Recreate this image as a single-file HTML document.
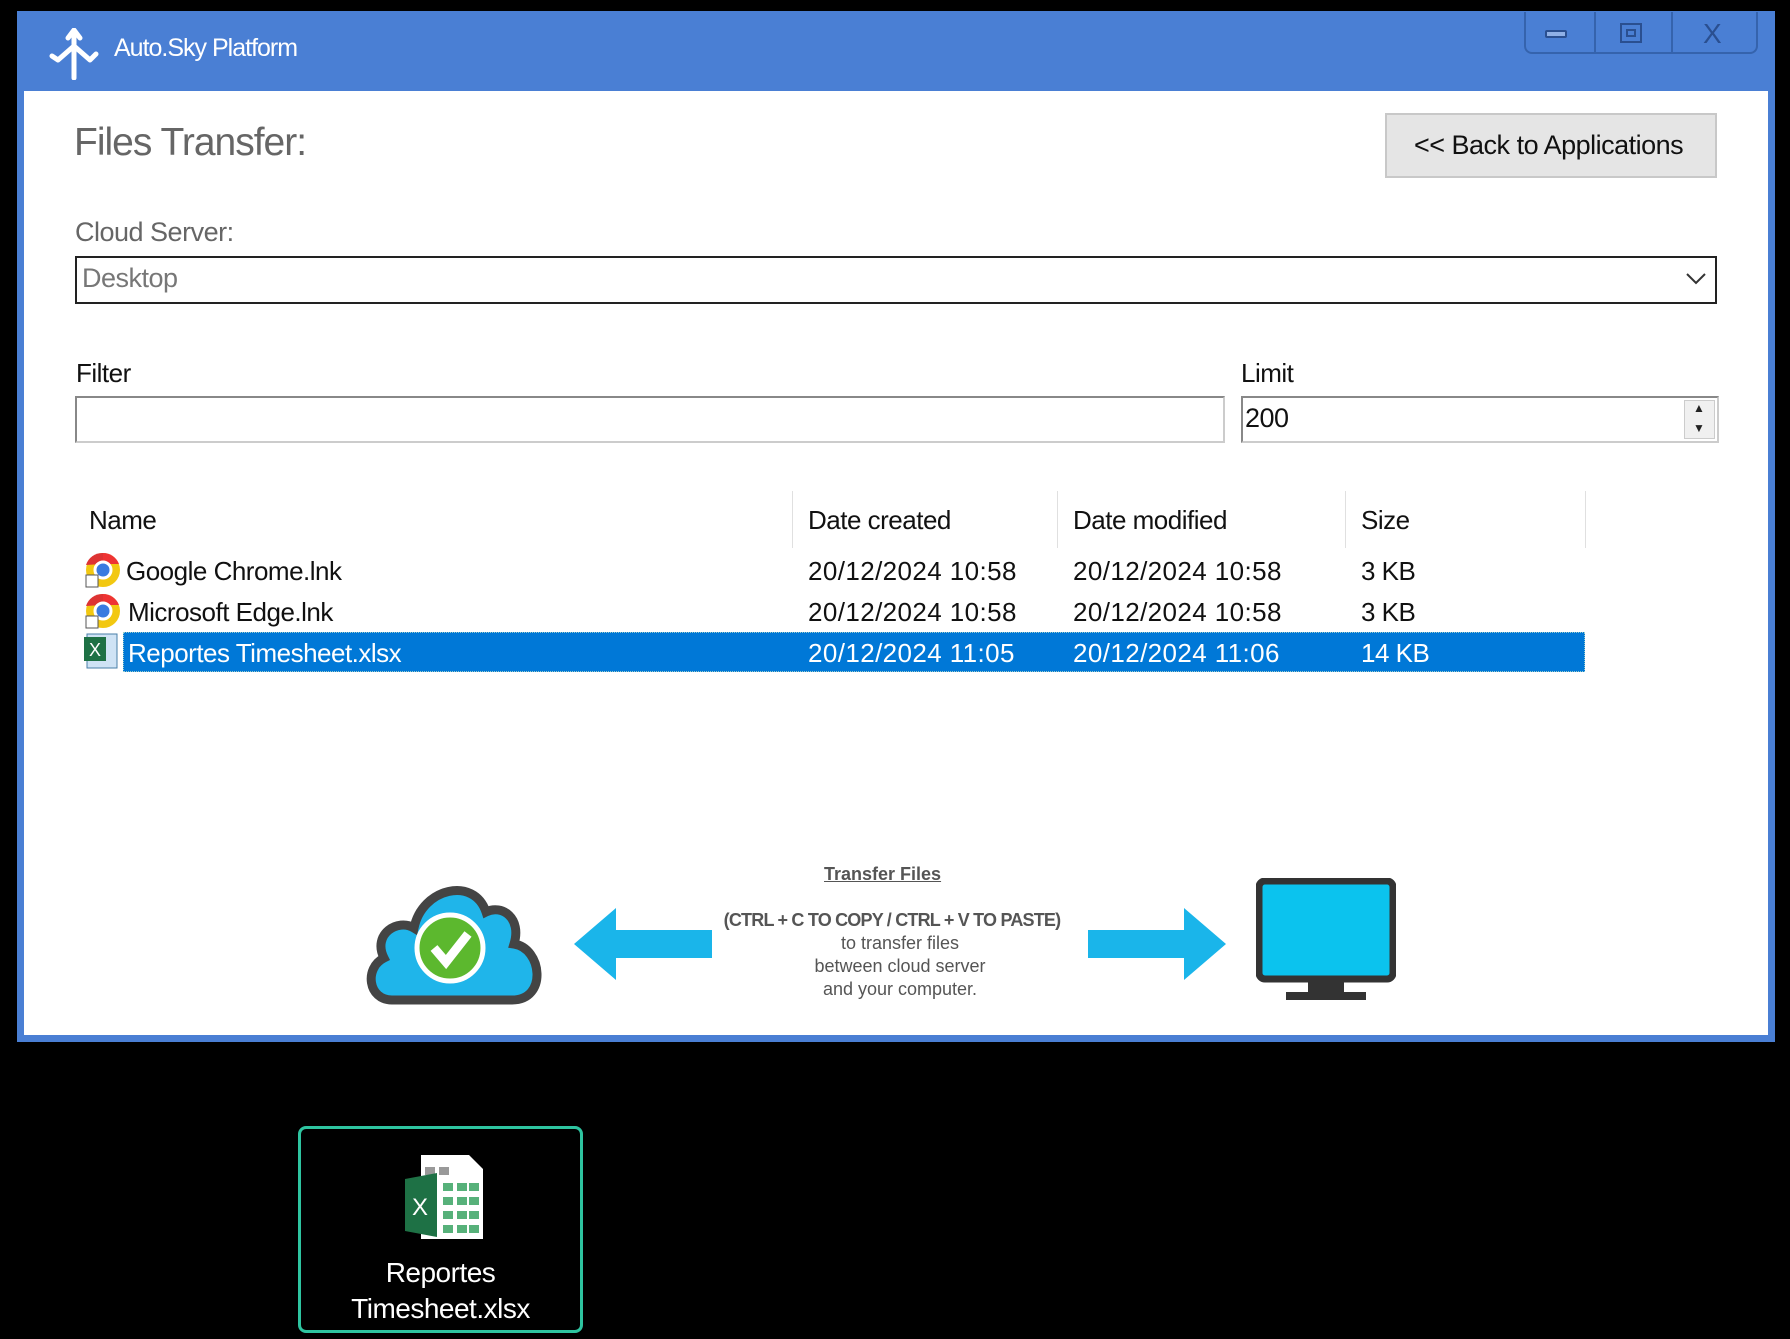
<!DOCTYPE html>
<html><head><meta charset="utf-8"><style>
*{margin:0;padding:0;box-sizing:border-box}
body{width:1790px;height:1339px;background:#000;position:relative;overflow:hidden;font-family:"Liberation Sans",sans-serif}
.a{position:absolute}
.win{left:17px;top:11px;width:1758px;height:1031px;background:#4a7fd4}
.cont{left:24px;top:91px;width:1744px;height:944px;background:#fff}
.t{position:absolute;white-space:nowrap}
.row{font-size:26px;color:#111;letter-spacing:-0.5px}
.d{letter-spacing:0.4px}
</style></head><body>
<div class="a win"></div>
<div class="a cont"></div>
<svg class="a" style="left:48px;top:28px" width="52" height="52" viewBox="0 0 52 52"><path d="M26 2 L26 50 M26 18 L10 32 M26 18 L42 32 M10 32 L4 28 M42 32 L48 26 M26 2 L20 10 M26 2 L32 10" stroke="#fff" stroke-width="5" fill="none" stroke-linecap="round"/></svg>
<div class="t" style="left:114px;top:34px;font-size:25px;color:#fff;letter-spacing:-1px">Auto.Sky Platform</div>
<div class="a" style="left:1524px;top:12px;width:234px;height:42px;border:2px solid #3563ad;border-top:none;border-radius:0 0 8px 8px;background:#4a7fd4"></div>
<div class="a" style="left:1594px;top:12px;width:2px;height:42px;background:#3563ad"></div>
<div class="a" style="left:1671px;top:12px;width:2px;height:42px;background:#3563ad"></div>
<div class="a" style="left:1545px;top:30px;width:22px;height:8px;border:2px solid #2a4f90;background:#8fb0e6;border-radius:2px"></div>
<div class="a" style="left:1620px;top:23px;width:22px;height:20px;border:2px solid #2a4f90;"></div>
<div class="a" style="left:1626px;top:29px;width:10px;height:8px;border:2px solid #2a4f90;"></div>
<div class="t" style="left:1703px;top:18px;font-size:28px;color:#2a4f90">X</div>
<div class="t" style="left:74px;top:121px;font-size:39px;color:#666;letter-spacing:-1px">Files Transfer:</div>
<div class="a" style="left:1385px;top:113px;width:332px;height:65px;background:#e5e5e5;border:2px solid #c8c8c8"></div>
<div class="t" style="left:1414px;top:130px;font-size:27px;color:#111;letter-spacing:-0.5px">&lt;&lt; Back to Applications</div>
<div class="t" style="left:75px;top:217px;font-size:27px;color:#666;letter-spacing:-0.5px">Cloud Server:</div>
<div class="a" style="left:75px;top:256px;width:1642px;height:48px;border:2px solid #222;background:#fff"></div>
<div class="t" style="left:82px;top:263px;font-size:27px;color:#777;letter-spacing:-0.5px">Desktop</div>
<svg class="a" style="left:1685px;top:272px" width="22" height="14"><path d="M2 2 L11 11 L20 2" stroke="#333" stroke-width="2" fill="none"/></svg>
<div class="t" style="left:76px;top:358px;font-size:26px;color:#111;letter-spacing:-0.5px">Filter</div>
<div class="a" style="left:75px;top:396px;width:1150px;height:47px;border:2px solid #888;border-right-color:#ccc;border-bottom-color:#ccc;background:#fff"></div>
<div class="t" style="left:1241px;top:358px;font-size:26px;color:#111;letter-spacing:-0.5px">Limit</div>
<div class="a" style="left:1241px;top:396px;width:478px;height:47px;border:2px solid #888;border-right-color:#ccc;border-bottom-color:#ccc;background:#fff"></div>
<div class="t" style="left:1245px;top:403px;font-size:27px;color:#111;letter-spacing:-0.5px">200</div>
<div class="a" style="left:1684px;top:400px;width:31px;height:39px;background:#f0f0f0;border:1px solid #ccc"></div>
<div class="t" style="left:1693px;top:401px;font-size:12px;color:#222">▲</div>
<div class="t" style="left:1693px;top:421px;font-size:12px;color:#222">▼</div>
<div class="a" style="left:792px;top:491px;width:1px;height:57px;background:#e0e0e0"></div>
<div class="a" style="left:1057px;top:491px;width:1px;height:57px;background:#e0e0e0"></div>
<div class="a" style="left:1345px;top:491px;width:1px;height:57px;background:#e0e0e0"></div>
<div class="a" style="left:1585px;top:491px;width:1px;height:57px;background:#e0e0e0"></div>
<div class="t row" style="left:89px;top:505px">Name</div>
<div class="t row" style="left:808px;top:505px">Date created</div>
<div class="t row" style="left:1073px;top:505px">Date modified</div>
<div class="t row" style="left:1361px;top:505px">Size</div>
<div class="a" style="left:123px;top:632px;width:1462px;height:40px;background:#0078d7;border:1px dotted #9cc"></div>
<svg class="a" style="left:84px;top:551px" width="38" height="38"><circle cx="19" cy="19" r="17" fill="#f2c811"/><path d="M19 2 A17 17 0 0 1 35 13 L19 13 Z" fill="#e33"/><path d="M2 14 A17 17 0 0 1 19 2 L19 13 Z" fill="#d33"/><circle cx="19" cy="19" r="8" fill="#3a7be0" stroke="#fff" stroke-width="3"/><rect x="2" y="24" width="12" height="12" fill="#fff" stroke="#555"/></svg>
<svg class="a" style="left:84px;top:592px" width="38" height="38"><circle cx="19" cy="19" r="17" fill="#f2c811"/><path d="M19 2 A17 17 0 0 1 35 13 L19 13 Z" fill="#e33"/><path d="M2 14 A17 17 0 0 1 19 2 L19 13 Z" fill="#d33"/><circle cx="19" cy="19" r="8" fill="#3a7be0" stroke="#fff" stroke-width="3"/><rect x="2" y="24" width="12" height="12" fill="#fff" stroke="#555"/></svg>
<svg class="a" style="left:83px;top:632px" width="40" height="38"><rect x="4" y="2" width="30" height="34" fill="#cfe3f5" stroke="#4a7fa8"/><rect x="1" y="5" width="22" height="24" fill="#1e7145"/><text x="6" y="24" font-size="18" fill="#fff" font-family="Liberation Sans">X</text></svg>
<div class="t row" style="left:126px;top:556px">Google Chrome.lnk</div>
<div class="t row d" style="left:808px;top:556px">20/12/2024 10:58</div>
<div class="t row d" style="left:1073px;top:556px">20/12/2024 10:58</div>
<div class="t row" style="left:1361px;top:556px">3 KB</div>
<div class="t row" style="left:128px;top:597px">Microsoft Edge.lnk</div>
<div class="t row d" style="left:808px;top:597px">20/12/2024 10:58</div>
<div class="t row d" style="left:1073px;top:597px">20/12/2024 10:58</div>
<div class="t row" style="left:1361px;top:597px">3 KB</div>
<div class="t row" style="left:128px;top:638px;color:#fff">Reportes Timesheet.xlsx</div>
<div class="t row d" style="left:808px;top:638px;color:#fff">20/12/2024 11:05</div>
<div class="t row d" style="left:1073px;top:638px;color:#fff">20/12/2024 11:06</div>
<div class="t row" style="left:1361px;top:638px;color:#fff">14 KB</div>
<svg class="a" style="left:362px;top:872px" width="184" height="134" viewBox="0 0 184 134"><path d="M30 128 C6 128 2 96 22 86 C10 62 36 46 52 56 C60 16 112 4 124 40 C140 32 160 46 152 72 C180 76 186 128 150 128 Z" fill="#1fb5ea" stroke="#444" stroke-width="9"/><circle cx="88" cy="76" r="33" fill="#5cb82e" stroke="#fff" stroke-width="5"/><path d="M72 76 L84 90 L106 62" stroke="#fff" stroke-width="9" fill="none"/></svg>
<svg class="a" style="left:574px;top:908px" width="138" height="72"><path d="M0 36 L42 0 L42 22 L138 22 L138 50 L42 50 L42 72 Z" fill="#1ab5ea"/></svg>
<svg class="a" style="left:1088px;top:908px" width="138" height="72"><path d="M138 36 L96 0 L96 22 L0 22 L0 50 L96 50 L96 72 Z" fill="#1ab5ea"/></svg>
<svg class="a" style="left:1256px;top:878px" width="140" height="128"><rect x="3" y="3" width="134" height="98" rx="6" fill="#0bc3ee" stroke="#333" stroke-width="7"/><rect x="52" y="101" width="36" height="14" fill="#333"/><rect x="30" y="114" width="80" height="8" fill="#333"/></svg>
<div class="t" style="left:824px;top:864px;font-size:18px;font-weight:bold;color:#555;text-decoration:underline">Transfer Files</div>
<div class="t" style="left:0;width:1790px;text-align:center;top:910px;font-size:18px;font-weight:bold;color:#555;transform:translateX(-3px);letter-spacing:-0.8px">(CTRL + C TO COPY / CTRL + V TO PASTE)</div>
<div class="t" style="left:0;width:1800px;text-align:center;top:932px;font-size:18px;color:#555;line-height:23px">to transfer files<br>between cloud server<br>and your computer.</div>
<div class="a" style="left:298px;top:1126px;width:285px;height:207px;border:3px solid #2ec4a0;border-radius:8px"></div>
<svg class="a" style="left:403px;top:1153px" width="82" height="88"><path d="M18 2 L66 2 L80 16 L80 86 L18 86 Z" fill="#fff"/><g fill="#2e9e5a" opacity="0.8"><rect x="40" y="30" width="10" height="8"/><rect x="54" y="30" width="10" height="8"/><rect x="66" y="30" width="10" height="8"/><rect x="40" y="44" width="10" height="8"/><rect x="54" y="44" width="10" height="8"/><rect x="66" y="44" width="10" height="8"/><rect x="40" y="58" width="10" height="8"/><rect x="54" y="58" width="10" height="8"/><rect x="66" y="58" width="10" height="8"/><rect x="40" y="72" width="10" height="8"/><rect x="54" y="72" width="10" height="8"/><rect x="66" y="72" width="10" height="8"/></g><g fill="#999"><rect x="22" y="14" width="10" height="8"/><rect x="36" y="14" width="10" height="8"/></g><path d="M2 26 L34 20 L34 84 L2 78 Z" fill="#1e7145"/><text x="9" y="62" font-size="24" fill="#fff" font-family="Liberation Sans">X</text></svg>
<div class="t" style="left:298px;width:285px;text-align:center;top:1257px;font-size:28px;color:#fff;letter-spacing:-0.5px">Reportes</div>
<div class="t" style="left:298px;width:285px;text-align:center;top:1293px;font-size:28px;color:#fff;letter-spacing:-0.5px">Timesheet.xlsx</div>
</body></html>
